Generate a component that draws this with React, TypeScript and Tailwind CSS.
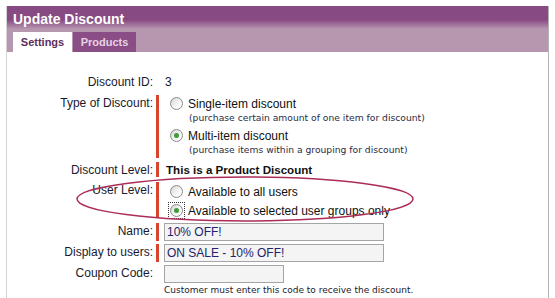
const font = "font-['Liberation_Sans',Arial,sans-serif]";
const smallFont = "font-['DejaVu_Sans',Verdana,sans-serif]";

const Radio = ({ checked, focused }: { checked?: boolean; focused?: boolean }) => (
  <span
    className={`flex h-[15px] w-[15px] shrink-0 items-center justify-center ${
      focused ? "outline outline-1 outline-dotted outline-[#333]" : ""
    }`}
  >
    <span className="flex h-[13px] w-[13px] items-center justify-center rounded-full border border-[#8c8c8c] bg-gradient-to-br from-[#d4d4d4] via-[#f2f2f2] to-white">
      {checked && <span className="h-[5px] w-[5px] rounded-full bg-[#3f9a3a]" />}
    </span>
  </span>
);

interface RowProps {
  label: string;
  bar?: boolean;
  children: React.ReactNode;
  className?: string;
}

const Row = ({ label, bar, children, className = "" }: RowProps) => (
  <div className={`flex ${className}`}>
    <div className="w-[146px] shrink-0 text-right text-[12px] leading-[16px] text-[#1a1a2e]">{label}</div>
    <div className={`ml-[3px] w-[3px] shrink-0 ${bar ? "bg-[#d8452c]" : ""}`} />
    <div className="ml-[5px] flex-1">{children}</div>
  </div>
);

const TextBox = ({ value, width }: { value?: string; width: string }) => (
  <div
    className={`${width} h-[18px] border border-[#a5a5a5] bg-[#f4f4f4] px-[2px] text-[12px] leading-[16px] text-[#23236b]`}
  >
    {value}
  </div>
);

export default function App() {
  return (
    <div className={`relative h-[298px] w-[555px] overflow-hidden bg-white pl-[6px] pt-[6px] ${font}`}>
      <div className="h-[300px] w-[543px] border-x border-l-[#d4d4d4] border-r-[#b4b4b4] bg-white">
        {/* header */}
        <div className="h-[46px] bg-gradient-to-b from-[#874a83] from-30% to-[#b797af] to-50% pl-[6px]">
          <div className="pt-[4px] text-[14px] font-bold leading-[18px] text-white">Update Discount</div>
          <div className="mt-[4px] flex">
            <div className="flex h-[20px] w-[59px] items-center justify-center bg-white text-[11px] font-bold text-[#5b2f5c]">
              Settings
            </div>
            <div className="ml-[1px] flex h-[20px] w-[63px] items-center justify-center bg-[#8b4d86] text-[11px] font-bold text-[#e6d3e4]">
              Products
            </div>
          </div>
        </div>

        {/* form */}
        <div className="pt-[22px]">
          <Row label="Discount ID:">
            <div className="pl-[1px] text-[12px] leading-[16px] text-[#1a1a2e]">3</div>
          </Row>

          <Row label="Type of Discount:" bar className="mt-[5px] h-[63px]">
            <div className="pl-[5px] pt-[1px]">
              <div className="flex h-[15px] items-center gap-[4px]">
                <Radio />
                <span className="text-[12px] text-[#111]">Single-item discount</span>
              </div>
              <div className={`${smallFont} pl-[20px] text-[9.2px] leading-[13px] text-[#2b2b44]`}>
                (purchase certain amount of one item for discount)
              </div>
              <div className="mt-[4px] flex h-[15px] items-center gap-[4px]">
                <Radio checked />
                <span className="text-[12px] text-[#111]">Multi-item discount</span>
              </div>
              <div className={`${smallFont} pl-[20px] text-[9.2px] leading-[13px] text-[#2b2b44]`}>
                (purchase items within a grouping for discount)
              </div>
            </div>
          </Row>

          <Row label="Discount Level:" bar className="mt-[4px] h-[15px]">
            <div className="pl-[2px] text-[11.6px] font-bold leading-[16px] text-[#111]">This is a Product Discount</div>
          </Row>

          <Row label="User Level:" bar className="mt-[5px] h-[36px]">
            <div className="pl-[5px] pt-[2px]">
              <div className="flex h-[15px] items-center gap-[4px]">
                <Radio />
                <span className="text-[12px] text-[#111]">Available to all users</span>
              </div>
              <div className="mt-[4px] flex h-[15px] items-center gap-[4px]">
                <Radio checked focused />
                <span className="text-[12px] text-[#111]">Available to selected user groups only</span>
              </div>
            </div>
          </Row>

          <Row label="Name:" bar className="mt-[5px] h-[18px]">
            <TextBox value="10% OFF!" width="w-[220px]" />
          </Row>

          <Row label="Display to users:" bar className="mt-[3px] h-[18px]">
            <TextBox value="ON SALE - 10% OFF!" width="w-[220px]" />
          </Row>

          <Row label="Coupon Code:" className="mt-[3px]">
            <TextBox width="w-[120px]" />
            <div className={`${smallFont} mt-[1px] text-[9px] leading-[12px] text-[#1a1a2e]`}>
              Customer must enter this code to receive the discount.
            </div>
          </Row>
        </div>
      </div>

      {/* hand-drawn annotation */}
      <svg className="pointer-events-none absolute left-0 top-0" width="555" height="298">
        <ellipse cx="245" cy="199" rx="168" ry="22" fill="none" stroke="#ad2d58" strokeWidth="1.5" />
      </svg>
    </div>
  );
}
